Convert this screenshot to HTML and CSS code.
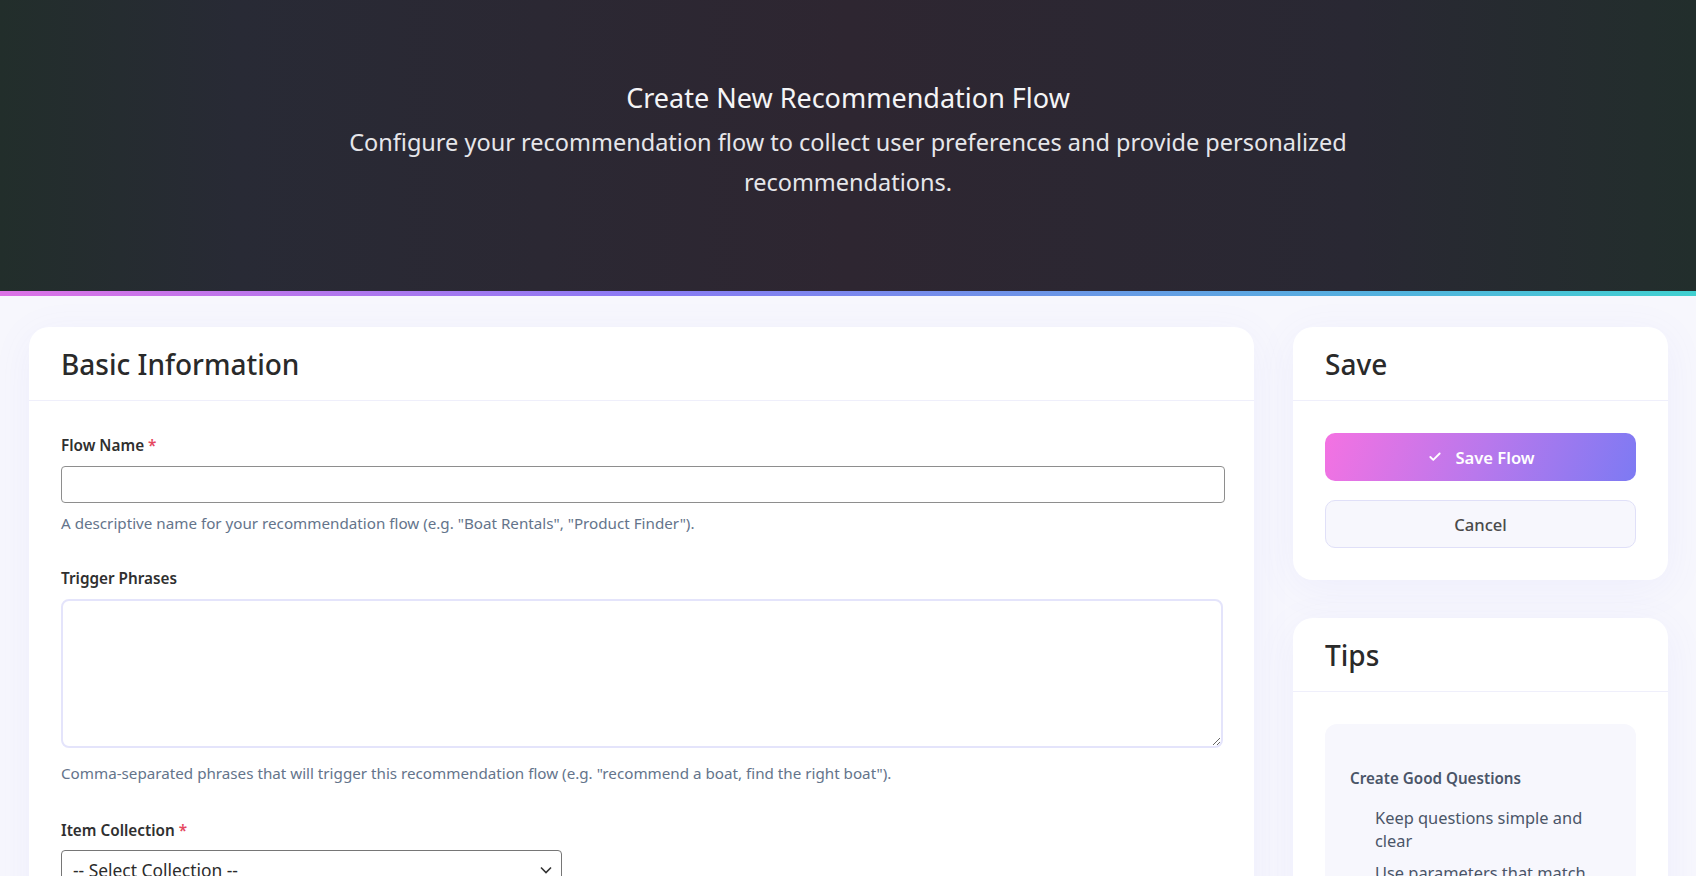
FILE: index.html
```html
<!DOCTYPE html>
<html lang="en">
<head>
<meta charset="utf-8">
<title>Create New Recommendation Flow</title>
<link rel="stylesheet" href="styles.css">
</head>
<body>
<header class="hero">
  <h1 class="hero-title">Create New Recommendation Flow</h1>
  <p class="hero-sub">Configure your recommendation flow to collect user preferences and provide personalized recommendations.</p>
</header>
<div class="stripe"></div>
<main class="layout">
  <section class="card">
    <div class="card-header"><h2>Basic Information</h2></div>
    <div class="card-body">
      <div class="group">
        <label class="label" for="name">Flow Name <span class="req">*</span></label>
        <input class="input" id="name" type="text">
        <p class="hint">A descriptive name for your recommendation flow (e.g. "Boat Rentals", "Product Finder").</p>
      </div>
      <div class="group">
        <label class="label" for="phrases">Trigger Phrases</label>
        <textarea class="textarea" id="phrases"></textarea>
        <p class="hint hint-area">Comma-separated phrases that will trigger this recommendation flow (e.g. "recommend a boat, find the right boat").</p>
      </div>
      <div class="group">
        <label class="label label-coll" for="coll">Item Collection <span class="req">*</span></label>
        <div class="select-wrap">
          <select class="select" id="coll"><option>-- Select Collection --</option></select>
          <svg class="chev" viewBox="0 0 12 8" width="12" height="8"><polyline points="1 1.5 6 6.5 11 1.5" fill="none" stroke="#333" stroke-width="1.6"/></svg>
        </div>
      </div>
    </div>
  </section>
  <aside class="side">
    <section class="card">
      <div class="card-header"><h2>Save</h2></div>
      <div class="card-body">
        <button class="btn btn-primary" type="button">
          <svg class="check" viewBox="0 0 24 24" width="14" height="14"><polyline points="20 6 9 17 4 12" fill="none" stroke="#fff" stroke-width="3.2" stroke-linecap="round" stroke-linejoin="round"/></svg>
          <span>Save Flow</span>
        </button>
        <button class="btn btn-secondary" type="button">Cancel</button>
      </div>
    </section>
    <section class="card">
      <div class="card-header"><h2>Tips</h2></div>
      <div class="card-body">
        <div class="tip">
          <h4 class="tip-title">Create Good Questions</h4>
          <ul class="tip-list">
            <li>Keep questions simple and clear</li>
            <li>Use parameters that match your item attributes</li>
            <li>Order questions from general to specific</li>
          </ul>
        </div>
      </div>
    </section>
  </aside>
</main>
</body>
</html>
```
FILE: styles.css
```css
* { box-sizing: border-box; }
body {
  margin: 0;
  background: #f7f7fd;
  font-family: "Noto Sans", "Open Sans", sans-serif;
  color: #2b2b2b;
}
.hero {
  background: linear-gradient(90deg, #222e2b 0%, #282a35 14%, #2e2631 50%, #292833 80%, #222e2c 100%);
  padding: 80px 20px 89px;
  text-align: center;
  color: #f4f4f6;
}
.hero-title {
  margin: 0 0 6px;
  font-size: 27px;
  font-weight: 400;
  line-height: 36px;
}
.hero-sub {
  margin: 0 auto;
  max-width: 1060px;
  font-size: 23.5px;
  line-height: 40px;
  color: #e6e6ea;
}
.stripe {
  height: 5px;
  background: linear-gradient(90deg, #dc72e6 0%, #8a7af4 38%, #6e92e8 60%, #52b2de 82%, #40d0d0 100%);
}
.layout {
  display: grid;
  grid-template-columns: 1fr 375px;
  gap: 39px;
  padding: 31px 28px 40px 29px;
  align-items: start;
}
.card {
  background: #fff;
  border-radius: 20px;
  box-shadow: 0 8px 40px rgba(120, 110, 240, 0.07);
}
.card-header {
  padding: 20px 32px 19px;
  border-bottom: 1px solid #efeffb;
}
.card-header h2 {
  margin: 0;
  font-size: 28px;
  font-weight: 500;
  line-height: 34px;
  color: #2a2a2a;
}
.card-body { padding: 32px; }
.group { margin-bottom: 32px; }
.group:last-child { margin-bottom: 0; }
.label {
  display: block;
  font-size: 15.3px;
  font-weight: 600;
  line-height: 24px;
  margin-bottom: 9px;
  color: #2f2f2f;
}
.label-coll { padding-top: 2px; margin-bottom: 8px; }
.req { color: #e5485f; }
.input {
  display: block;
  width: calc(100% + 3px);
  height: 37px;
  border: 1px solid #8e8e8e;
  border-radius: 4px;
  background: #fff;
}
.hint {
  margin: 10px 0 0;
  font-size: 15.2px;
  line-height: 21px;
  color: #64748b;
}
.hint-area { margin-top: 15px; }
.textarea {
  display: block;
  width: calc(100% + 1px);
  height: 149px;
  border: 2px solid #e4e4fb;
  border-radius: 8px;
  resize: vertical;
  font-family: inherit;
}
.select-wrap {
  position: relative;
  width: 501px;
}
.select {
  display: block;
  width: 100%;
  height: 40px;
  border: 1px solid #767676;
  border-radius: 4px;
  padding: 0 30px 0 11px;
  font-family: inherit;
  font-size: 17.4px;
  color: #2b2b2b;
  background: #fff;
  appearance: none;
  -webkit-appearance: none;
}
.chev {
  position: absolute;
  right: 10px;
  top: 16px;
  pointer-events: none;
}
.side {
  display: flex;
  flex-direction: column;
  gap: 38px;
}
.btn {
  display: flex;
  align-items: center;
  justify-content: center;
  width: 100%;
  height: 48px;
  border-radius: 10px;
  font-family: inherit;
  font-size: 16.6px;
  cursor: pointer;
}
.btn-primary {
  gap: 13px;
  border: none;
  background: linear-gradient(110deg, #f472e2 0%, #b978ec 50%, #7d7af3 100%);
  color: #fff;
  font-weight: 600;
}
.btn-primary .check { margin-left: 2px; }
.btn-secondary {
  margin-top: 19px;
  background: #f7f7fd;
  border: 1px solid #e0e0f8;
  color: #4a4a4a;
  font-weight: 500;
}
.tip {
  background: #f7f7fd;
  border-radius: 12px;
  padding: 24px 25px;
}
.tip-title {
  margin: 19px 0 17px;
  font-size: 15.2px;
  font-weight: 600;
  line-height: 22px;
  color: #4a5568;
}
.tip-list {
  list-style: none;
  margin: 0;
  padding: 0 0 0 25px;
}
.tip-list li {
  font-size: 16.4px;
  line-height: 23px;
  margin-bottom: 9px;
  color: #4a5568;
}
```
